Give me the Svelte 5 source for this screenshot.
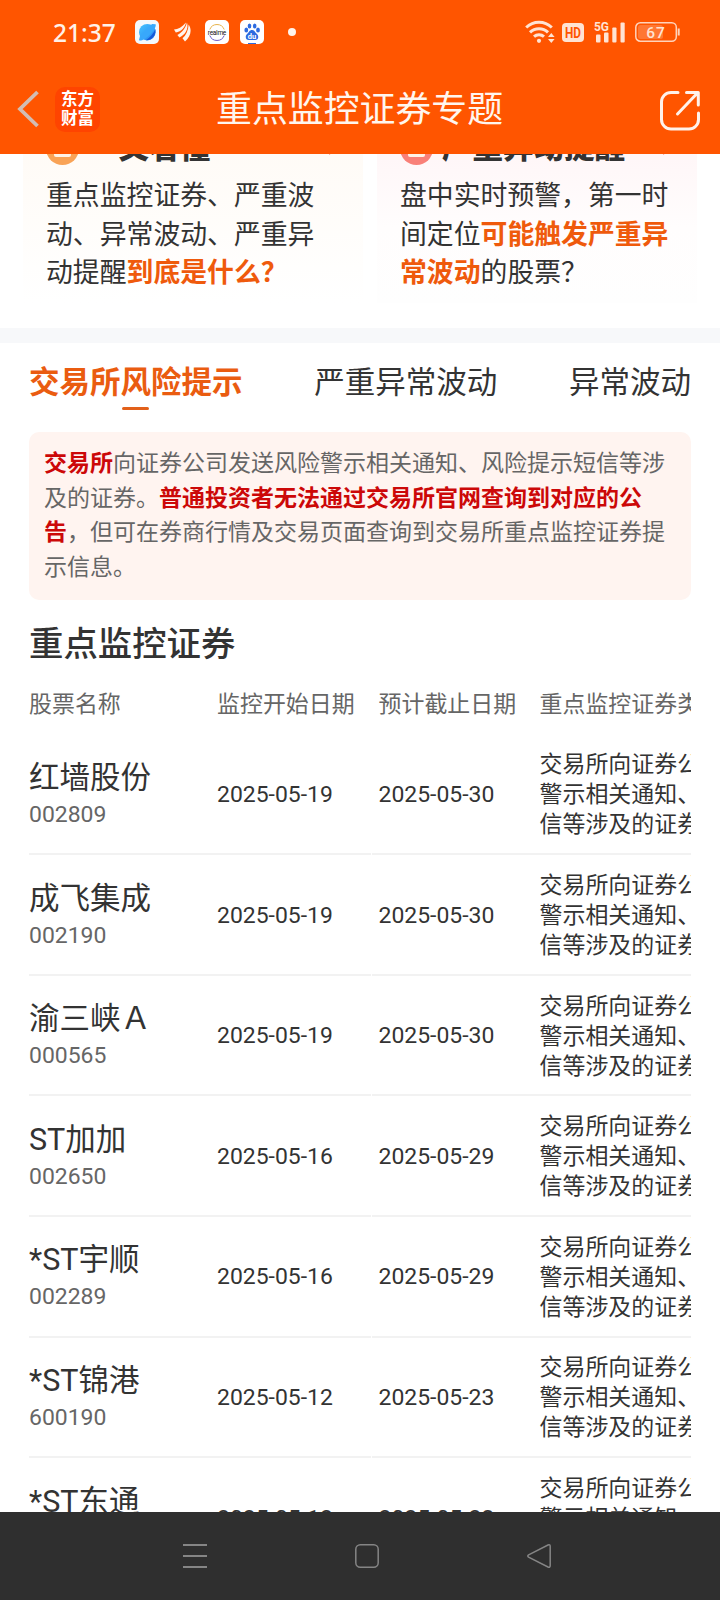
<script lang="ts">
  interface Stock {
    name: string;
    code: string;
    start: string;
    end: string;
  }

  const typeText = '交易所向证券公司发送风险警示相关通知、风险提示短信等涉及的证券';

  const tabs = ['交易所风险提示', '严重异常波动', '异常波动'];
  const columns = ['股票名称', '监控开始日期', '预计截止日期', '重点监控证券类型'];

  const stocks: Stock[] = [
    { name: '红墙股份', code: '002809', start: '2025-05-19', end: '2025-05-30' },
    { name: '成飞集成', code: '002190', start: '2025-05-19', end: '2025-05-30' },
    { name: '渝三峡Ａ', code: '000565', start: '2025-05-19', end: '2025-05-30' },
    { name: 'ST加加', code: '002650', start: '2025-05-16', end: '2025-05-29' },
    { name: '*ST宇顺', code: '002289', start: '2025-05-16', end: '2025-05-29' },
    { name: '*ST锦港', code: '600190', start: '2025-05-12', end: '2025-05-23' },
    { name: '*ST东通', code: '300379', start: '2025-05-12', end: '2025-05-23' },
  ];

  let activeTab = $state(0);
</script>

<div class="phone">
  <header>
    <div class="status">
      <span class="time">21:37</span>
      <svg class="app-icon" width="24" height="24" viewBox="0 0 24 24">
        <defs>
          <linearGradient id="planet" x1="0" y1="0" x2="1" y2="1">
            <stop offset="0" stop-color="#45c3ff" />
            <stop offset="1" stop-color="#2583f2" />
          </linearGradient>
        </defs>
        <rect width="24" height="24" rx="5" fill="#f4f8fc" />
        <circle cx="12.3" cy="12.2" r="8.300" fill="url(#planet)" />
        <path d="M4 20c1 1.600 6-.6 10.500-5C19 10.500 21.500 6 20.600 4.200L17 4 5 16Z" fill="#38a8fb" />
        <path d="M20.500 9c.6 6.500-3.500 11.500-9.700 11.300C15 17.700 18.500 13.500 20.500 9Z" fill="#1558d8" />
      </svg>
      <svg class="app-icon leaf" width="18" height="20" viewBox="0 0 18 20">
        <g fill="#fff4ec">
          <path d="M0 7.500C4 7.500 8 5 12 .500 11 5.500 7.500 9.300 1.800 10.500Z" />
          <path d="M3.400 13C8 10.500 11.500 6 13 .500 14.800 6.500 11.500 12.800 5.400 15.500Z" />
          <path d="M8.500 16.300c3.600-3 5.800-8 6.100-13.800 3.600 5 2.300 12-3.600 17Z" />
        </g>
      </svg>
      <svg class="app-icon" width="24" height="24" viewBox="0 0 24 24">
        <rect width="24" height="24" rx="5" fill="#fff" />
        <path d="M4.800 9.500a7.700 7.700 0 0 1 14.400 0" fill="none" stroke="#e7b34b" />
        <path d="M4.800 15.500a7.700 7.700 0 0 0 14.400 0" fill="none" stroke="#6e5bc9" />
        <text x="12" y="14.500" text-anchor="middle" font-size="6.500" textLength="18.500" fill="#111">realme</text>
      </svg>
      <svg class="app-icon" width="24" height="24" viewBox="0 0 24 24">
        <rect width="24" height="24" rx="5" fill="#fff" />
        <g fill="#2d6be0">
          <ellipse cx="6.300" cy="10" rx="1.900" ry="2.500" />
          <ellipse cx="9.500" cy="6" rx="1.800" ry="2.500" />
          <ellipse cx="14.700" cy="6" rx="1.800" ry="2.500" />
          <ellipse cx="18" cy="10" rx="1.900" ry="2.500" />
          <path d="M12 10c2.600 0 3 2.300 4.700 3.800 2.700 2.300 1.600 6.200-1.400 6.200H8.700c-3 0-4.100-3.900-1.400-6.200C9 12.300 9.400 10 12 10Z" />
          <rect x="8" y="23" width="8" height="1" />
        </g>
        <text x="12" y="18.500" text-anchor="middle" font-size="7.500" font-weight="700" fill="#fff">du</text>
      </svg>
      <span class="dot"></span>

      <div class="signals">
        <svg width="30" height="24" viewBox="0 0 30 24">
          <g fill="none" stroke="#ffe3d3" stroke-width="3">
            <path d="M1.200 7.500a18.500 18.500 0 0 1 25.600 0" />
            <path d="M5 12.300a13 13 0 0 1 18 0" />
            <path d="M9 16.700a7.500 7.500 0 0 1 10 0" />
          </g>
          <circle cx="14" cy="20.800" r="2.100" fill="#ffe3d3" />
          <path d="M23 17l3.300-4 3.300 4ZM23 19h6.600l-3.300 4Z" fill="#ffe3d3" />
        </svg>
        <svg class="hd" width="22" height="19" viewBox="0 0 22 19">
          <rect width="22" height="19" rx="4" fill="#ffe3d3" />
          <text x="11" y="14.700" text-anchor="middle" font-size="14.500" font-weight="700" textLength="16" lengthAdjust="spacingAndGlyphs" fill="#ff5500">HD</text>
        </svg>
        <svg width="32" height="22" viewBox="0 0 32 22">
          <text x="0" y="9.500" font-size="12" font-weight="700" textLength="15" lengthAdjust="spacingAndGlyphs" fill="#ffe3d3">5G</text>
          <g fill="#ffe3d3">
            <rect x="2" y="13.500" width="4.500" height="8" rx="1" />
            <rect x="10" y="11.500" width="4.500" height="10" rx="1" />
            <rect x="18.300" y="6.500" width="4.200" height="15" rx="1" />
            <rect x="26.500" y="1.500" width="4.200" height="20" rx="1" />
          </g>
        </svg>
        <svg class="battery" width="46" height="20" viewBox="0 0 46 20">
          <rect x="3" y="3" width="25" height="14" rx="2.500" fill="#ff7733" />
          <rect x=".8" y=".8" width="40.500" height="18.400" rx="4.500" fill="none" stroke="#ffd3bb" stroke-width="1.500" />
          <path d="M43.700 6.500v7" stroke="#ffd3bb" stroke-width="2" />
          <text x="21" y="15.600" text-anchor="middle" font-size="15.500" font-weight="500" letter-spacing="1" fill="#ffe3d3">67</text>
        </svg>
      </div>
    </div>

    <div class="titlebar">
      <svg class="back" width="24" height="38" viewBox="0 0 24 38">
        <path d="M20.500 2 3 19l17.500 17" fill="none" stroke="#d2bdb3" stroke-width="3.800" />
      </svg>
      <div class="logo"><span>东方</span><span>财富</span></div>
      <h1>重点监控证券专题</h1>
      <svg class="share" width="42" height="42" viewBox="0 0 42 42">
        <g fill="none" stroke="#fff2ea" stroke-width="3" stroke-linecap="round" stroke-linejoin="round">
          <path d="M19 2.500h-7A9.500 9.500 0 0 0 2.500 12v17.500A9.500 9.500 0 0 0 12 39h18a9.500 9.500 0 0 0 9.500-9.500V23" />
          <path d="M18.500 24 38 3.500M27.500 2.500h11.800V15" />
        </g>
      </svg>
    </div>
  </header>

  <main>
    <section class="cards">
      <article class="card warm">
        <div class="card-head">
          <span class="badge"><i></i></span>
          <strong>一文看懂</strong>
          <svg width="10" height="16" viewBox="0 0 10 16"><path d="m2 1 6 6.500L2 14" fill="none" stroke="#f0605a" stroke-width="2" /></svg>
        </div>
        <p>重点监控证券、严重波动、异常波动、严重异动提醒<b>到底是什么？</b></p>
      </article>
      <article class="card rose">
        <div class="card-head">
          <span class="badge"><i></i></span>
          <strong>严重异动提醒</strong>
          <svg width="10" height="16" viewBox="0 0 10 16"><path d="m2 1 6 6.500L2 14" fill="none" stroke="#f0605a" stroke-width="2" /></svg>
        </div>
        <p>盘中实时预警，第一时间定位<b>可能触发严重异常波动</b>的股票？</p>
      </article>
    </section>

    <nav class="tabs">
      {#each tabs as tab, i}
        <button class:active={activeTab === i} onclick={() => (activeTab = i)}>{tab}</button>
      {/each}
    </nav>

    <p class="notice">
      <b>交易所</b>向证券公司发送风险警示相关通知、风险提示短信等涉及的证券。<b>普通投资者无法通过交易所官网查询到对应的公告</b>，但可在券商行情及交易页面查询到交易所重点监控证券提示信息。
    </p>

    <h2>重点监控证券</h2>

    <div class="table">
      <div class="row head">
        {#each columns as column}
          <div class="cell">{column}</div>
        {/each}
      </div>
      {#each stocks as stock (stock.code)}
        <div class="row">
          <div class="cell stock">
            <span class="name">{stock.name}</span>
            <span class="code">{stock.code}</span>
          </div>
          <div class="cell">{stock.start}</div>
          <div class="cell end">{stock.end}</div>
          <div class="cell type">{typeText}</div>
        </div>
      {/each}
    </div>
  </main>

  <footer>
    <svg width="26" height="26" viewBox="0 0 26 26">
      <path d="M1 2h24M1 13h24M1 24h24" stroke="#858585" stroke-width="1.800" />
    </svg>
    <svg width="26" height="26" viewBox="0 0 26 26">
      <rect x="1.800" y="1.800" width="22.400" height="22.400" rx="4.500" fill="none" stroke="#858585" stroke-width="1.500" />
    </svg>
    <svg width="26" height="26" viewBox="0 0 26 26">
      <path d="M2.600 11.800 22 2q2.200-.8 2.200 1.500v19q0 2.300-2.200 1.500L2.600 14.200q-1.600-1.200 0-2.400Z" fill="none" stroke="#858585" stroke-width="1.500" />
    </svg>
  </footer>
</div>

<style>
  :global(body) {
    margin: 0;
  }

  .phone {
    display: flex;
    flex-direction: column;
    width: 720px;
    height: 1600px;
    overflow: hidden;
    background: #fff;
    color: #333;
    font-family: Roboto, 'Noto Sans CJK SC', sans-serif;
  }

  svg {
    display: block;
    flex-shrink: 0;
  }

  header {
    position: relative;
    z-index: 1;
    flex-shrink: 0;
    height: 154px;
    background: #ff5500;
  }

  .status {
    display: flex;
    align-items: center;
    height: 64px;
    padding: 0 39px 0 53px;
  }

  .time {
    width: 82px;
    color: #fff1e8;
    font-family: 'Noto Sans', sans-serif;
    font-size: 24.5px;
    font-weight: 500;
    white-space: nowrap;
  }

  .app-icon {
    margin-right: 11px;
  }

  .app-icon.leaf {
    margin: 0 14px 0 4px;
  }

  .app-icon.leaf + .app-icon {
    margin-left: -1px;
  }

  .dot {
    width: 8px;
    height: 8px;
    margin-left: 13px;
    border-radius: 50%;
    background: #fff4ec;
  }

  .signals {
    display: flex;
    align-items: center;
    margin-left: auto;
  }

  .hd {
    margin: 1px 10px 0 7px;
  }

  .battery {
    margin-left: 9px;
  }

  .titlebar {
    display: flex;
    align-items: center;
    height: 90px;
    padding: 0 19px 0 17px;
  }

  .logo {
    display: flex;
    flex-direction: column;
    justify-content: center;
    align-items: center;
    width: 45px;
    height: 45px;
    margin-left: 14px;
    border-radius: 10px;
    background: #ff4400;
    color: #fff;
    font-size: 16.5px;
    font-weight: 700;
    line-height: 19px;
  }

  h1 {
    flex: 1;
    margin: 2px 0 0 116px;
    color: #fff6ee;
    font-size: 35.900px;
    font-weight: 400;
    line-height: 50px;
    white-space: nowrap;
  }

  .share {
    margin-top: 3px;
  }

  main {
    flex: 1;
    min-height: 0;
    overflow: hidden;
  }

  .cards {
    display: flex;
    gap: 14px;
    margin-top: -39px;
    padding: 0 23px 25px;
    border-bottom: 15px solid #f7f8fa;
  }

  .card {
    height: 188px;
    box-sizing: border-box;
    padding: 16px 23px 0;
  }

  .card.warm {
    width: 340px;
    background: linear-gradient(#fffaf4, #fff);
  }

  .card.rose {
    width: 320px;
    background: linear-gradient(#fff3f5, #fffdfd 60%, #fefefe);
  }

  .card-head {
    display: flex;
    align-items: center;
    height: 34px;
  }

  .card-head strong {
    flex: 1;
    margin-left: 9px;
    font-size: 30.5px;
    font-weight: 900;
    line-height: 34px;
    white-space: nowrap;
  }

  .card-head svg {
    margin-right: 3px;
  }

  .badge {
    display: flex;
    justify-content: center;
    align-items: center;
    width: 33px;
    height: 33px;
    border-radius: 50%;
    background: #f9a356;
  }

  .badge i {
    width: 17px;
    height: 17px;
    border-radius: 2px;
    background: #fff3e6;
  }

  .rose .badge {
    background: #f98078;
  }

  .card p {
    width: 272px;
    margin: 12px 0 0;
    font-size: 26.850px;
    line-height: 38.600px;
  }

  .card b {
    color: #ef5a0c;
    font-weight: 700;
  }

  .tabs {
    display: flex;
    justify-content: space-between;
    padding: 17px 29px 0;
  }

  .tabs button {
    display: flex;
    flex-direction: column;
    align-items: center;
    height: 72px;
    padding: 0;
    border: 0;
    background: none;
    color: #333;
    font-family: inherit;
    font-size: 30.500px;
    line-height: 46px;
    white-space: nowrap;
  }

  .tabs .active {
    color: #ea5c10;
    font-weight: 700;
  }

  .active::after {
    content: '';
    width: 27px;
    height: 3px;
    margin-top: 1px;
    border-radius: 2px;
    background: #e2601a;
  }

  .notice {
    height: 168px;
    box-sizing: border-box;
    margin: 0 29px;
    padding: 15px 15px 0;
    border-radius: 10px;
    background: #fff4f0;
    color: #666;
    font-size: 23px;
    line-height: 34.700px;
  }

  .notice b {
    color: #cc0808;
    font-weight: 700;
  }

  h2 {
    margin: 19px 29px 0;
    font-size: 34.400px;
    font-weight: 500;
    line-height: 50px;
  }

  .table {
    margin: 5px 29px 0;
    overflow: hidden;
    font-size: 22.950px;
    line-height: 30px;
  }

  .row {
    display: grid;
    grid-template-columns: 180px 161.500px 161px 290px;
    height: 120.600px;
  }

  .row.head {
    height: 60.700px;
    color: #666;
  }

  .cell {
    display: flex;
    align-items: center;
    box-sizing: border-box;
    padding: 2px 4px 0 8px;
    border-bottom: 2px solid #f2f2f2;
  }

  .cell:first-child {
    padding-left: 0;
  }

  .head .cell {
    padding-top: 2px;
    border: 0;
  }

  .cell.end {
    margin-left: 1px;
    padding-left: 7px;
  }

  .cell.type {
    padding-top: 3px;
  }

  .cell.stock {
    flex-direction: column;
    justify-content: center;
    align-items: flex-start;
    padding-top: 0;
  }

  .name {
    font-size: 30.500px;
    line-height: 41px;
  }

  .code {
    color: #666;
    line-height: 33px;
  }

  footer {
    display: flex;
    align-items: center;
    gap: 146px;
    flex-shrink: 0;
    height: 88px;
    padding-left: 182px;
    background: #2f2f2f;
  }
</style>
